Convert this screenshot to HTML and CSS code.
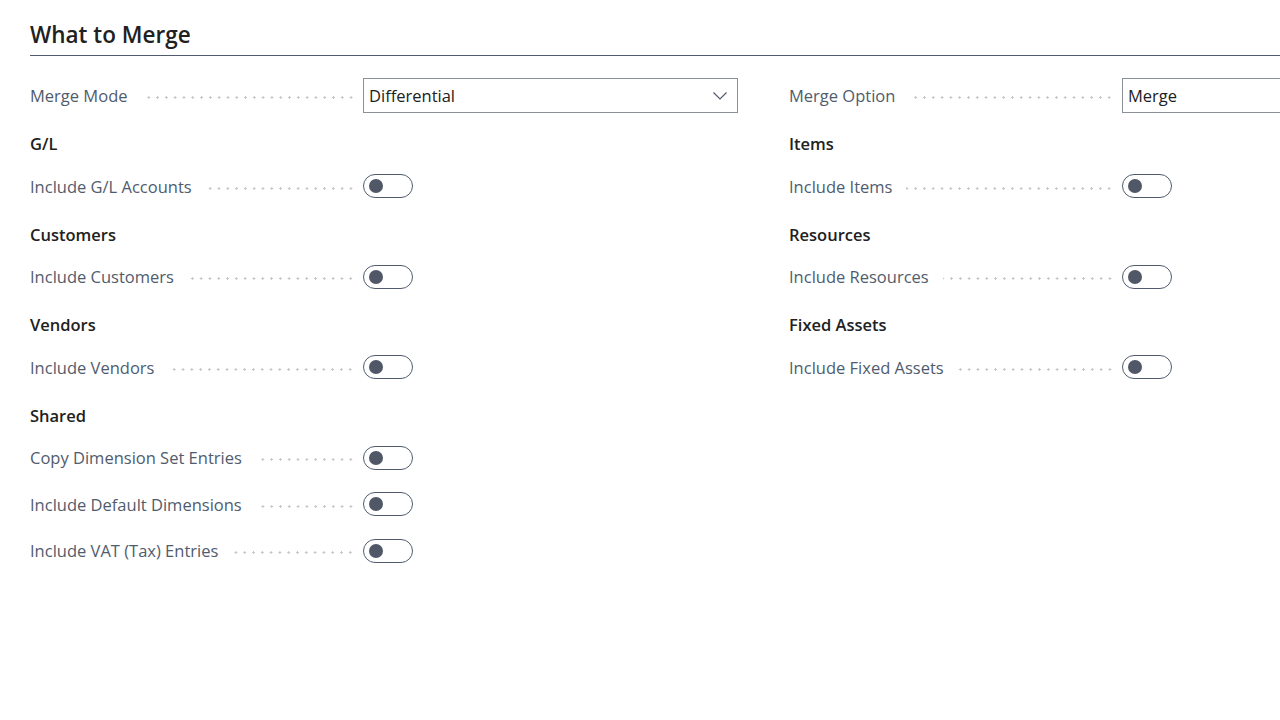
FILE: index.html
```html
<!DOCTYPE html>
<html lang="en">
<head>
    <meta charset="UTF-8">
    <title>What to Merge</title>
    <link rel="stylesheet" href="styles.css">
</head>
<body>

    <section class="group">
        <h2 class="group-title">What to Merge</h2>

        <div class="columns">
            <!-- left column -->
            <div class="column">
                <div class="field">
                    <label class="caption">Merge Mode</label>
                    <div class="select">
                        <span>Differential</span>
                        <svg class="chevron" width="14" height="8" viewBox="0 0 14 8"><path d="M0.5 0.5 L7 7 L13.5 0.5" fill="none" stroke="#505c6d" stroke-width="1.2"/></svg>
                    </div>
                </div>

                <h3 class="sub">G/L</h3>
                <div class="field">
                    <label class="caption">Include G/L Accounts</label>
                    <span class="toggle"></span>
                </div>

                <h3 class="sub">Customers</h3>
                <div class="field">
                    <label class="caption">Include Customers</label>
                    <span class="toggle"></span>
                </div>

                <h3 class="sub">Vendors</h3>
                <div class="field">
                    <label class="caption">Include Vendors</label>
                    <span class="toggle"></span>
                </div>

                <h3 class="sub">Shared</h3>
                <div class="field tight">
                    <label class="caption">Copy Dimension Set Entries</label>
                    <span class="toggle"></span>
                </div>
                <div class="field tight">
                    <label class="caption">Include Default Dimensions</label>
                    <span class="toggle"></span>
                </div>
                <div class="field tight">
                    <label class="caption">Include VAT (Tax) Entries</label>
                    <span class="toggle"></span>
                </div>
            </div>

            <!-- right column -->
            <div class="column">
                <div class="field">
                    <label class="caption">Merge Option</label>
                    <div class="select">
                        <span>Merge</span>
                        <svg class="chevron" width="14" height="8" viewBox="0 0 14 8"><path d="M0.5 0.5 L7 7 L13.5 0.5" fill="none" stroke="#505c6d" stroke-width="1.2"/></svg>
                    </div>
                </div>

                <h3 class="sub">Items</h3>
                <div class="field">
                    <label class="caption">Include Items</label>
                    <span class="toggle"></span>
                </div>

                <h3 class="sub">Resources</h3>
                <div class="field">
                    <label class="caption">Include Resources</label>
                    <span class="toggle"></span>
                </div>

                <h3 class="sub">Fixed Assets</h3>
                <div class="field">
                    <label class="caption">Include Fixed Assets</label>
                    <span class="toggle"></span>
                </div>
            </div>
        </div>
    </section>

</body>
</html>
```

FILE: styles.css
```css
html {
    overflow: hidden;
}
body {
    margin: 0;
    padding: 18px 0 0 30px;
    background: #fff;
    font-family: "Open Sans", "Noto Sans", sans-serif;
    color: #212121;
    width: 1500px;
}
.group-title {
    margin: 0;
    font-size: 22.5px;
    font-weight: 600;
    line-height: 34px;
    padding-bottom: 3px;
    border-bottom: 1px solid #505c6d;
    color: #212121;
}
.columns {
    display: grid;
    grid-template-columns: 708px 708px;
    column-gap: 51px;
    padding-top: 22px;
}
.field {
    display: flex;
    align-items: center;
    height: 35px;
    margin-bottom: 21px;
}
.field.tight {
    margin-bottom: 11.5px;
}
.caption {
    flex: 1;
    display: flex;
    align-items: center;
    font-size: 16.5px;
    color: #505c6d;
    white-space: nowrap;
    margin-right: 8px;
}
/* dotted leader after each caption */
.caption::after {
    content: "";
    flex: 1;
    height: 3px;
    margin: 4px 0 0 14px;
    background-image: radial-gradient(circle, #c6c6c6 1px, transparent 1.3px);
    background-size: 8.8px 3px;
    background-position: right center;
    background-repeat: repeat-x;
}
.select {
    width: 375px;
    height: 35px;
    box-sizing: border-box;
    border: 1px solid #8a8f98;
    display: flex;
    align-items: center;
    justify-content: space-between;
    padding: 0 10px 0 5px;
    font-size: 16.5px;
    color: #212121;
}
.chevron {
    display: block;
}
.sub {
    margin: 0;
    font-size: 16.5px;
    font-weight: 600;
    line-height: 20px;
    height: 20px;
    margin-bottom: 14.5px;
    color: #212121;
}
.toggle {
    width: 375px;
    height: 24px;
    position: relative;
}
.toggle::before {
    content: "";
    position: absolute;
    left: 0;
    top: 0;
    width: 50px;
    height: 24px;
    box-sizing: border-box;
    border: 1.3px solid #505c6d;
    border-radius: 12px;
}
.toggle::after {
    content: "";
    position: absolute;
    left: 6px;
    top: 5px;
    width: 14px;
    height: 14px;
    border-radius: 50%;
    background: #505767;
}
```
